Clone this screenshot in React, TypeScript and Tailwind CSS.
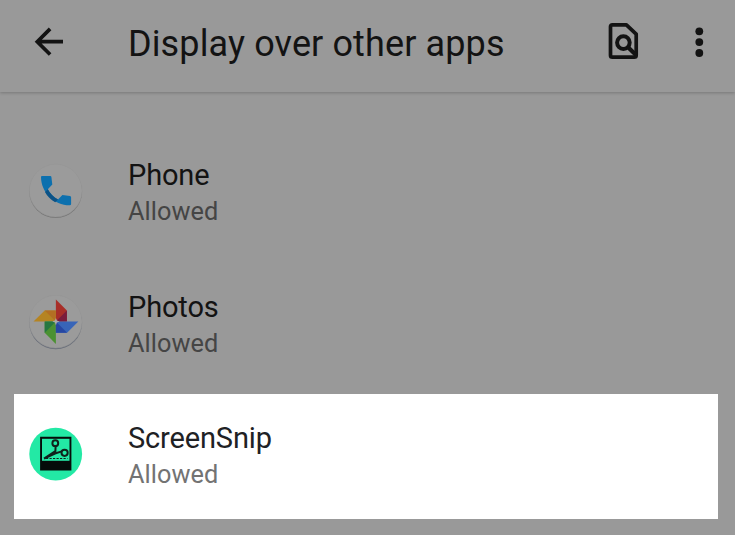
import type { ReactNode } from "react";

function PhoneIcon() {
  return (
    <svg width="56" height="58" viewBox="0 0 56 58">
      <circle cx="27.7" cy="28.7" r="26.4" fill="#737373" />
      <circle cx="27.7" cy="27.6" r="26.4" fill="#9b9b9b" stroke="#959595" strokeWidth="0.6" />
      <path
        d="M14 12.9H22.2Q23.3 12.9 23.4 14L24.3 21.6L19.8 26.2C22 30.3 25.4 34 30 36.4L34.4 32L42 32.9Q43.1 33.1 43.1 34.2V40.9Q43.1 42.3 41.7 42.3C26 42.3 13 29.2 13 14Q13 12.9 14 12.9Z"
        fill="#0d70ae"
      />
      <path d="M19.8 26.2C22 30.3 25.4 34 30 36.4L27.2 39.2C23 37 19 33 17 29Z" fill="#0b5286" />
    </svg>
  );
}

function PhotosIcon() {
  return (
    <svg width="56" height="58" viewBox="0 0.8 56 58">
      <circle cx="27.7" cy="28.6" r="26.4" fill="#686d79" />
      <circle cx="27.7" cy="27.4" r="26.4" fill="#9b9b9b" stroke="#959595" strokeWidth="0.6" />
      <path d="M27.9 5.2L38.9 16.4V27.4H27.9Z" fill="#a82e28" />
      <path d="M27.9 27.4L38.9 16.4V27.4Z" fill="#7a1c3c" />
      <path d="M5.5 27.4L16.7 16.4H27.9V27.4Z" fill="#b58422" />
      <path d="M16.7 16.4H27.9V27.4Z" fill="#b36f23" />
      <path d="M27.9 49.8L16.7 38.6V27.4H27.9Z" fill="#4b9132" />
      <path d="M27.9 27.4L16.7 38.6V27.4Z" fill="#267741" />
      <path d="M50.3 27.4L39.1 38.6H27.9V27.4Z" fill="#3865b8" />
      <path d="M27.9 27.4L39.1 38.6H27.9Z" fill="#2747a2" />
      <path d="M27.9 23.8L28.9 26.4L31.5 27.4L28.9 28.4L27.9 31L26.9 28.4L24.3 27.4L26.9 26.4Z" fill="#aaa" />
    </svg>
  );
}

function ScreenSnipIcon() {
  return (
    <svg width="56" height="58" viewBox="0 0 56 58">
      <circle cx="27.7" cy="28.1" r="26.4" fill="#23e9a5" />
      <path d="M12.1 10.8H43.4V44.4H12.1Z" fill="#050c0a" />
      <path d="M14 12.8H41.5V34.8H14Z" fill="#23e9a5" />
      <g fill="none" stroke="#10231c" strokeWidth="2">
        <circle cx="27.3" cy="17.2" r="2.9" />
        <circle cx="36.6" cy="26.8" r="3.1" />
        <path d="M27.6 20L27.4 25.2L16 32.7M33.8 25.4L27 27.5L16 32.7" />
      </g>
      <path d="M18 32.5H39.5" stroke="#10231c" strokeWidth="1.1" strokeDasharray="2.2 1.3" />
    </svg>
  );
}

function AppRow({ icon, name, highlighted = false }: {
  icon: ReactNode;
  name: string;
  highlighted?: boolean;
}) {
  return (
    <li className={`mr-[17px] ml-[14px] flex h-[125px] pl-[14px] ${highlighted ? "bg-white" : ""}`}>
      <div className="w-[100px] shrink-0 pt-[32px]">{icon}</div>
      <div className="pt-[26px] whitespace-nowrap">
        <div className={`text-[29px] leading-[36px] tracking-[-0.15px] ${highlighted ? "text-[#202124]" : "text-[#131313]"}`}>{name}</div>
        <div className={`mt-[3px] text-[25.3px] leading-[32px] tracking-[0.05px] ${highlighted ? "text-[#737373]" : "text-[#454545]"}`}>Allowed</div>
      </div>
    </li>
  );
}

export default function App() {
  return (
    <main className="h-[535px] w-[735px] overflow-hidden bg-[#999999] font-['Roboto',sans-serif]">
      <header className="flex h-[92px] bg-[#999999] text-[#131313] shadow-[0_1px_3px_rgba(0,0,0,0.22)]">
        <button aria-label="Back" className="h-[56px] w-[128px] pt-[27px] pl-[34px]">
          <svg width="30" height="29" viewBox="0 0 30 29" fill="none" stroke="currentColor" strokeWidth="3.7">
            <path d="M29 14.7H3M16.1 1.9L3.3 14.7L16.1 27.5" />
          </svg>
        </button>
        <h1 className="w-[479px] pt-[22px] text-[36px] leading-[44px] font-normal tracking-[0.12px] whitespace-nowrap">Display over other apps</h1>
        <button aria-label="Search in page" className="h-[60px] w-[87px] pt-[22px]">
          <svg width="34" height="38" viewBox="0 0 34 38" fill="none" stroke="currentColor" strokeWidth="3.7" strokeLinejoin="round">
            <path d="M5.5 2.8H19.4L29.2 12.2V33.2Q29.2 35.2 27.2 35.2H5.5Q3.5 35.2 3.5 33.2V4.8Q3.5 2.8 5.5 2.8Z" />
            <circle cx="16.4" cy="20.6" r="6.3" strokeWidth="4" />
            <path d="M20.8 25.1L29 33" strokeWidth="4.2" />
          </svg>
        </button>
        <button aria-label="More options" className="h-[60px] pt-[26px]">
          <svg width="12" height="32" viewBox="0 0 12 32" fill="currentColor">
            <circle cx="5.3" cy="4.3" r="3.9" />
            <circle cx="5.3" cy="15.1" r="3.9" />
            <circle cx="5.3" cy="26" r="3.9" />
          </svg>
        </button>
      </header>
      <ul className="flex flex-col pt-[39px]">
        <AppRow icon={<PhoneIcon />} name="Phone" />
        <li aria-hidden="true" className="h-[7px]" />
        <AppRow icon={<PhotosIcon />} name="Photos" />
        <li aria-hidden="true" className="h-[6px]" />
        <AppRow icon={<ScreenSnipIcon />} name="ScreenSnip" highlighted />
      </ul>
    </main>
  );
}
